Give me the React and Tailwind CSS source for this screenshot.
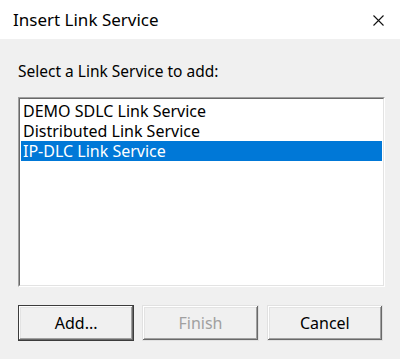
const items = ["DEMO SDLC Link Service", "Distributed Link Service", "IP-DLC Link Service"];

const bevel =
  "shadow-[inset_-1px_-1px_0_#696969,inset_1px_1px_0_#ffffff,inset_-2px_-2px_0_#a0a0a0,inset_2px_2px_0_#e3e3e3]";

function Button({ children, primary, disabled }) {
  return (
    <button
      type="button"
      className={
        "h-[36px] bg-[#e1e1e1] text-[16px] " +
        (primary ? "border border-[#3c3c3c] " : "border border-transparent ") +
        (disabled ? "text-[#a0a0a0] " : "text-black ")
      }
    >
      <div className={"h-full w-full flex items-center justify-center bg-[#f0f0f0] " + bevel}>{children}</div>
    </button>
  );
}

export default function App() {
  const selected = 2;

  return (
    <div
      className="w-[400px] h-[359px] bg-[#f0f0f0] flex flex-col"
      style={{ fontFamily: '"Noto Sans", "Open Sans", sans-serif' }}
    >
      <div className="h-[39px] bg-white flex items-center justify-between pl-[13px] pr-[16px]">
        <span className="text-[17px] text-black">Insert Link Service</span>
        <svg width="11" height="11" viewBox="0 0 11 11" className="mt-[1px]">
          <path d="M0.5 0.5 L10.5 10.5 M10.5 0.5 L0.5 10.5" stroke="#111" strokeWidth="1.1" />
        </svg>
      </div>

      <div className="flex-1 flex flex-col pl-[18px] pr-[15px]">
        <div className="mt-[20px] h-[26px] flex items-center text-[15.5px] text-black">
          Select a Link Service to add:
        </div>

        <div className="mt-[12px] h-[190px] bg-white border border-t-[#a0a0a0] border-l-[#a0a0a0] border-r-white border-b-white">
          <div className="h-full border border-t-[#696969] border-l-[#696969] border-r-[#e3e3e3] border-b-[#e3e3e3] pt-[2px] px-[1px]">
            {items.map((item, i) => (
              <div
                key={item}
                className={
                  "h-[20px] flex items-center pl-[2px] text-[16px] leading-none " +
                  (i === selected ? "bg-[#0078d7] text-white" : "text-black")
                }
              >
                {item}
              </div>
            ))}
          </div>
        </div>

        <div className="mt-[18px] grid grid-cols-3 gap-[8px] pr-[2px]">
          <Button primary>Add...</Button>
          <Button disabled>Finish</Button>
          <Button>Cancel</Button>
        </div>
      </div>
    </div>
  );
}
